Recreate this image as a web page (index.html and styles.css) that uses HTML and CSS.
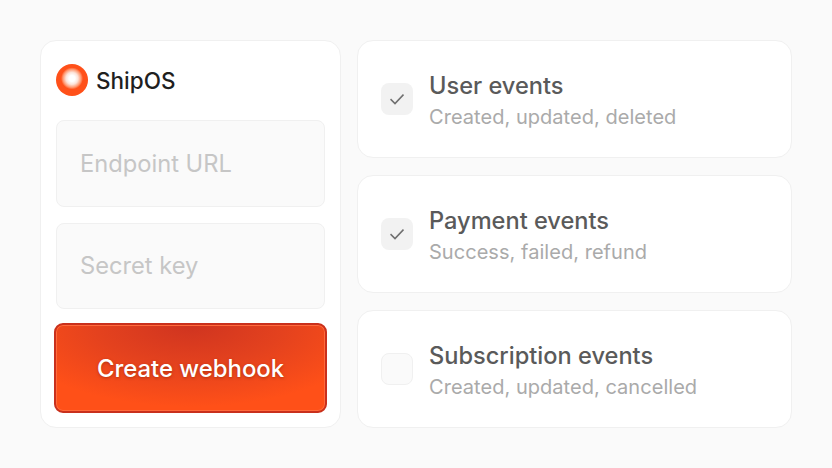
FILE: index.html
```html
<!DOCTYPE html>
<html lang="en">
<head>
  <meta charset="UTF-8">
  <meta name="viewport" content="width=device-width, initial-scale=1.0">
  <title>Create webhook</title>
  <link rel="stylesheet" href="styles.css">
</head>
<body>
  <div class="container">
    <!-- Webhook form -->
    <div class="card form-card">
      <div class="brand">
        <span class="brand-logo"></span>
        <span class="brand-name">ShipOS</span>
      </div>
      <div class="field">Endpoint URL</div>
      <div class="field">Secret key</div>
      <button class="create-btn" type="button">Create webhook</button>
    </div>

    <!-- Event list -->
    <div class="events">
      <div class="card event">
        <span class="checkbox">
          <svg width="14" height="14" viewBox="0 0 14 14"><path d="M0.5 7.2 5 11.5 13.5 2.5" /></svg>
        </span>
        <div class="event-text">
          <div class="event-title">User events</div>
          <div class="event-desc">Created, updated, deleted</div>
        </div>
      </div>
      <div class="card event">
        <span class="checkbox">
          <svg width="14" height="14" viewBox="0 0 14 14"><path d="M0.5 7.2 5 11.5 13.5 2.5" /></svg>
        </span>
        <div class="event-text">
          <div class="event-title">Payment events</div>
          <div class="event-desc">Success, failed, refund</div>
        </div>
      </div>
      <div class="card event">
        <span class="checkbox empty"></span>
        <div class="event-text">
          <div class="event-title">Subscription events</div>
          <div class="event-desc">Created, updated, cancelled</div>
        </div>
      </div>
    </div>
  </div>
</body>
</html>
```

FILE: styles.css
```css
* {
  box-sizing: border-box;
}

body {
  font-family: Inter, "Liberation Sans", sans-serif;
  background-color: #fafafa;
  margin: 0;
  padding: 0;
}

.container {
  width: 832px;
  height: 468px;
  padding: 40px;
  display: flex;
  gap: 16px;
}

.card {
  background: #fff;
  border: 1px solid #f0f0f0;
  border-radius: 16px;
}

.form-card {
  width: 301px;
  padding: 15px;
  display: flex;
  flex-direction: column;
}

.brand {
  display: flex;
  flex-shrink: 0;
  align-items: center;
  gap: 8px;
  height: 48px;
  margin-bottom: 16px;
}

.brand-logo {
  width: 32px;
  height: 32px;
  border-radius: 50%;
  background: radial-gradient(circle at 50% 45%, #fff 0, #fff 3px, #fce3d9 6px, #ff9a73 9px, #ff5019 11px);
}

.brand-name {
  font-size: 22.5px;
  font-weight: 500;
  color: #1f1f1f;
}

.field {
  flex-shrink: 0;
  height: 86.5px;
  margin-bottom: 16px;
  padding-left: 23px;
  display: flex;
  align-items: center;
  font-size: 23.7px;
  color: #c6c6c6;
  background: #fafafa;
  border: 1px solid #f0f0f0;
  border-radius: 8px;
}

.create-btn {
  flex-shrink: 0;
  height: 90px;
  margin: -2px -2px 0;
  font-family: inherit;
  font-size: 23.9px;
  font-weight: 500;
  color: #fff;
  text-shadow: 0 1px 3px rgba(120, 30, 0, 0.5);
  background: radial-gradient(ellipse 70% 95% at 50% 0, #cf3420 0, #e4421e 50%, #ff5018 100%);
  border: 2px solid #c9301c;
  border-radius: 9px;
  box-shadow: inset 0 0 0 1px #ff6a3c;
}

.events {
  flex: 1;
  display: flex;
  flex-direction: column;
  gap: 17px;
}

.event {
  flex: 1;
  padding-left: 23px;
  display: flex;
  align-items: center;
  gap: 16px;
}

.checkbox {
  width: 32px;
  height: 32px;
  display: flex;
  align-items: center;
  justify-content: center;
  background: #f2f2f2;
  border-radius: 8px;
}

.checkbox svg path {
  fill: none;
  stroke: #707070;
  stroke-width: 1.6;
}

.checkbox.empty {
  background: #fafafa;
  border: 1px solid #f0f0f0;
}

.event-text {
  padding-top: 2px;
}

.event-title {
  font-size: 23.6px;
  font-weight: 450;
  color: #5a5a5a;
  margin-bottom: 5px;
}

.event-desc {
  font-size: 20px;
  color: #aaa;
  letter-spacing: 0.002em;
}
```
